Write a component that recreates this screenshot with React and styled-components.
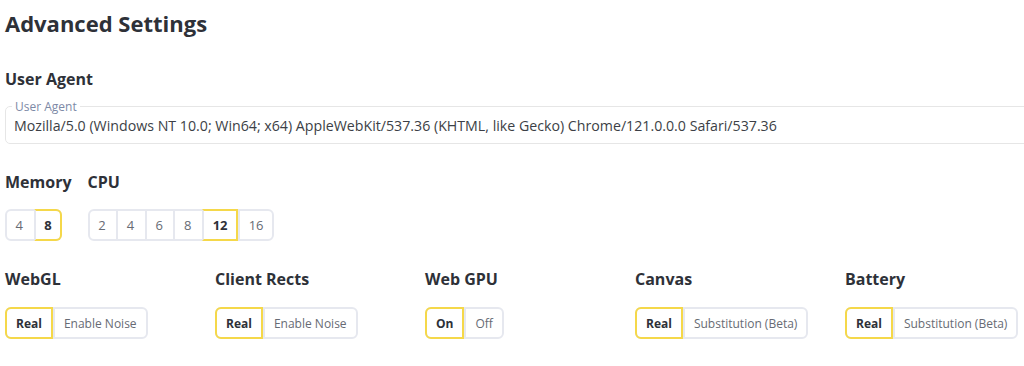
import React from 'react';
import styled, { createGlobalStyle } from 'styled-components';

const GlobalStyle = createGlobalStyle`
  body {
    margin: 0;
    background: #ffffff;
    font-family: 'Open Sans', 'Noto Sans', sans-serif;
    color: #2f323a;
  }
`;

const toggles = [
  { title: 'WebGL', options: ['Real', 'Enable Noise'], active: 0 },
  { title: 'Client Rects', options: ['Real', 'Enable Noise'], active: 0 },
  { title: 'Web GPU', options: ['On', 'Off'], active: 0 },
  { title: 'Canvas', options: ['Real', 'Substitution (Beta)'], active: 0 },
  { title: 'Battery', options: ['Real', 'Substitution (Beta)'], active: 0 },
];

const Segmented = ({ options, active, compact }) => (
  <Group>
    {options.map((opt, i) => (
      <Segment key={opt} $active={i === active} $compact={compact}>
        {opt}
      </Segment>
    ))}
  </Group>
);

const App = () => (
  <Page>
    <GlobalStyle />
    <Title>Advanced Settings</Title>

    <UaTitle>User Agent</UaTitle>
    <Field>
      <Legend>User Agent</Legend>
      <FieldValue>
        Mozilla/5.0 (Windows NT 10.0; Win64; x64) AppleWebKit/537.36 (KHTML, like Gecko) Chrome/121.0.0.0 Safari/537.36
      </FieldValue>
    </Field>

    <HardwareRow>
      <Block>
        <SectionTitle>Memory</SectionTitle>
        <Segmented options={['4', '8']} active={1} compact />
      </Block>
      <Block>
        <SectionTitle>CPU</SectionTitle>
        <Segmented options={['2', '4', '6', '8', '12', '16']} active={4} compact />
      </Block>
    </HardwareRow>

    <ToggleGrid>
      {toggles.map((t) => (
        <Block key={t.title} $gap={16}>
          <SectionTitle>{t.title}</SectionTitle>
          <Segmented options={t.options} active={t.active} />
        </Block>
      ))}
    </ToggleGrid>
  </Page>
);

export default App;

const Page = styled.div`
  padding: 7px 0 0 5px;
  overflow: hidden;
  width: 1024px;
  box-sizing: border-box;
`;

const Title = styled.h1`
  margin: 0;
  font-size: 22px;
  font-weight: 700;
  line-height: 32px;
  color: #2e3138;
`;

const SectionTitle = styled.h2`
  margin: 0;
  font-size: 16px;
  font-weight: 700;
  line-height: 24px;
  color: #2e3138;
`;

const UaTitle = styled(SectionTitle)`
  margin-top: 28px;
`;

const Field = styled.fieldset`
  margin: 9px -40px 0 0;
  padding: 0 8px 7px;
  border: 1px solid #e6e6e6;
  border-radius: 5px;
`;

const Legend = styled.legend`
  padding: 0 3px;
  margin-left: -2px;
  font-size: 12px;
  line-height: 13px;
  color: #7d89a6;
`;

const FieldValue = styled.div`
  margin-top: 3px;
  font-size: 14.2px;
  line-height: 20px;
  color: #3c3f46;
  white-space: nowrap;
`;

const HardwareRow = styled.div`
  display: flex;
  gap: 16px;
  margin-top: 26px;
`;

const Block = styled.div`
  display: flex;
  flex-direction: column;
  align-items: flex-start;
  gap: ${(p) => p.$gap || 15}px;
`;

const ToggleGrid = styled.div`
  display: grid;
  grid-template-columns: repeat(5, 210px);
  margin-top: 26px;
`;

const Group = styled.div`
  display: inline-flex;
  border: 2px solid #e6e8ef;
  border-radius: 6px;
  height: 32px;
  box-sizing: border-box;
`;

const Segment = styled.div`
  display: flex;
  align-items: center;
  justify-content: center;
  padding: 0 ${(p) => (p.$compact ? '8.6px' : '9px')};
  margin: -2px 0;
  font-size: ${(p) => (p.$compact ? '13px' : '12px')};
  color: ${(p) => (p.$active ? '#2e3138' : '#676b74')};
  font-weight: ${(p) => (p.$active ? 700 : 400)};
  border: 2px solid ${(p) => (p.$active ? '#f5d84a' : 'transparent')};
  box-sizing: border-box;
  & + & {
    border-left: 2px solid ${(p) => (p.$active ? '#f5d84a' : '#e6e8ef')};
  }
  &:first-child {
    margin-left: -2px;
    border-radius: 6px 0 0 6px;
  }
  &:last-child {
    margin-right: -2px;
    border-radius: 0 6px 6px 0;
  }
`;
